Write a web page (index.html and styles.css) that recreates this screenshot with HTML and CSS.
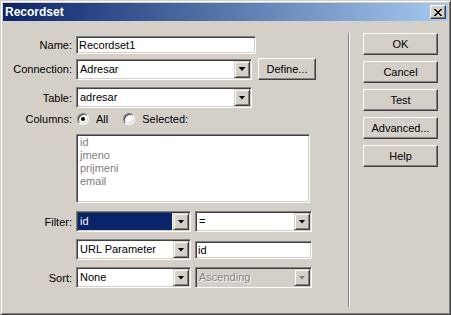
FILE: index.html
```html
<!DOCTYPE html>
<html lang="en">
<head>
  <meta charset="UTF-8" />
  <title>Recordset</title>
  <link rel="stylesheet" href="styles.css">
</head>
<body>
  <div class="dialog">
    <div class="titlebar">
      <span class="title">Recordset</span>
      <button class="close-btn" aria-label="Close">
        <svg width="8" height="7" viewBox="0 0 8 7" shape-rendering="crispEdges">
          <path d="M0 0h2v1h-2zM6 0h2v1h-2zM1 1h2v1h-2zM5 1h2v1h-2zM2 2h4v1h-4zM3 3h2v1h-2zM2 4h4v1h-4zM1 5h2v1h-2zM5 5h2v1h-2zM0 6h2v1h-2zM6 6h2v1h-2z" fill="#000"/>
        </svg>
      </button>
    </div>

    <div class="content">
      <div class="form">
        <div class="row row-name">
          <span class="label">Name:</span>
          <input class="field field-name" type="text" value="Recordset1" readonly />
        </div>

        <div class="row row-connection">
          <span class="label">Connection:</span>
          <div class="combo combo-wide">
            <span class="combo-text">Adresar</span>
            <span class="combo-btn"><i class="arrow"></i></span>
          </div>
          <button class="btn btn-define">Define...</button>
        </div>

        <div class="row row-table">
          <span class="label">Table:</span>
          <div class="combo combo-wide">
            <span class="combo-text">adresar</span>
            <span class="combo-btn"><i class="arrow"></i></span>
          </div>
        </div>

        <div class="row row-columns">
          <span class="label">Columns:</span>
          <span class="radio checked"></span>
          <span class="radio-label">All</span>
          <span class="radio radio-second"></span>
          <span class="radio-label">Selected:</span>
        </div>

        <div class="row row-list">
          <span class="label"></span>
          <div class="listbox">
            <div>id</div>
            <div>jmeno</div>
            <div>prijmeni</div>
            <div>email</div>
          </div>
        </div>

        <div class="row row-filter">
          <span class="label">Filter:</span>
          <div class="combo combo-small">
            <span class="combo-text selected">id</span>
            <span class="combo-btn"><i class="arrow"></i></span>
          </div>
          <div class="combo combo-right">
            <span class="combo-text">=</span>
            <span class="combo-btn"><i class="arrow"></i></span>
          </div>
        </div>

        <div class="row row-param">
          <span class="label"></span>
          <div class="combo combo-small">
            <span class="combo-text">URL Parameter</span>
            <span class="combo-btn"><i class="arrow"></i></span>
          </div>
          <input class="field field-param" type="text" value="id" readonly />
        </div>

        <div class="row row-sort">
          <span class="label">Sort:</span>
          <div class="combo combo-small">
            <span class="combo-text">None</span>
            <span class="combo-btn"><i class="arrow"></i></span>
          </div>
          <div class="combo combo-right disabled">
            <span class="combo-text">Ascending</span>
            <span class="combo-btn"><i class="arrow"></i></span>
          </div>
        </div>
      </div>

      <div class="divider"></div>

      <div class="actions">
        <button class="btn">OK</button>
        <button class="btn">Cancel</button>
        <button class="btn">Test</button>
        <button class="btn">Advanced...</button>
        <button class="btn">Help</button>
      </div>
    </div>
  </div>
</body>
</html>
```

FILE: styles.css
```css
body {
  margin: 0;
  padding: 0;
  font-family: "Liberation Sans", Arial, sans-serif;
  font-size: 11px;
  color: #000;
  background: #d4d0c8;
}

.dialog {
  width: 451px;
  height: 315px;
  box-sizing: border-box;
  border: 1px solid;
  border-color: #d4d0c8 #404040 #404040 #d4d0c8;
  box-shadow: inset 1px 1px #fff, inset -1px -1px #808080;
  padding: 2px;
  background: #d4d0c8;
  display: flex;
  flex-direction: column;
}

.titlebar {
  height: 18px;
  flex-shrink: 0;
  display: flex;
  align-items: center;
  justify-content: space-between;
  padding: 0 2px 0 2px;
  background: linear-gradient(to right, #0a246a, #a6caf0);
}

.title {
  color: #fff;
  font-weight: bold;
  font-size: 12px;
}

.close-btn {
  width: 16px;
  height: 14px;
  padding: 0;
  box-sizing: border-box;
  background: #d4d0c8;
  border: 1px solid;
  border-color: #fff #404040 #404040 #fff;
  box-shadow: inset -1px -1px #808080;
  display: flex;
  align-items: center;
  justify-content: center;
}

.content {
  flex: 1;
  display: flex;
}

.form {
  width: 345px;
  padding-top: 15px;
  display: flex;
  flex-direction: column;
}

.row {
  display: flex;
  align-items: center;
}

.row-name { height: 18px; }
.row-connection { height: 22px; margin-top: 4px; }
.row-table { height: 21px; margin-top: 7px; }
.row-columns { height: 14px; margin-top: 4px; }
.row-list { height: 69px; margin-top: 8px; }
.row-filter { height: 21px; margin-top: 8px; }
.row-param { height: 21px; margin-top: 7px; }
.row-sort { height: 21px; margin-top: 7px; }

.label {
  width: 69px;
  margin-right: 4px;
  flex-shrink: 0;
  text-align: right;
}

/* sunken 3d edge */
.field,
.combo,
.listbox,
.radio {
  box-sizing: border-box;
  border: 1px solid;
  border-color: #808080 #fff #fff #808080;
  box-shadow: inset 1px 1px #404040, inset -1px -1px #d4d0c8;
  background: #fff;
}

.field {
  height: 18px;
  padding: 0 2px;
  font: inherit;
  color: #000;
  outline: none;
}

.field-name { width: 180px; }
.field-param { width: 117px; margin-left: 4px; }

.combo {
  height: 21px;
  padding: 1px;
  display: flex;
}

.combo-wide { width: 176px; }
.combo-small { width: 115px; }
.combo-right { width: 117px; margin-left: 4px; }

.combo-text {
  flex: 1;
  padding-left: 2px;
  line-height: 17px;
  white-space: nowrap;
  overflow: hidden;
}

.combo-text.selected {
  background: #0a246a;
  color: #fff;
  margin-right: 1px;
}

.combo-btn {
  width: 16px;
  height: 17px;
  box-sizing: border-box;
  background: #d4d0c8;
  border: 1px solid;
  border-color: #d4d0c8 #404040 #404040 #d4d0c8;
  box-shadow: inset 1px 1px #fff, inset -1px -1px #808080;
  display: flex;
  align-items: center;
  justify-content: center;
}

.arrow {
  width: 7px;
  height: 4px;
  background: #000;
  clip-path: polygon(0 0, 100% 0, 50% 100%);
}

.combo.disabled {
  background: #d4d0c8;
}

.combo.disabled .combo-text {
  color: #808080;
  text-shadow: 1px 1px #fff;
}

.combo.disabled .arrow {
  background: #808080;
}

.radio {
  width: 12px;
  height: 12px;
  border-radius: 50%;
  margin-left: 1px;
  position: relative;
}

.radio.checked::after {
  content: "";
  position: absolute;
  left: 3px;
  top: 3px;
  width: 4px;
  height: 4px;
  border-radius: 50%;
  background: #000;
}

.radio-label {
  margin-left: 7px;
}

.radio-second {
  margin-left: 15px;
}

.listbox {
  width: 234px;
  height: 69px;
  padding: 1px 3px;
  line-height: 13px;
  color: #808080;
}

.divider {
  border-left: 1px solid #808080;
  border-right: 1px solid #fff;
  margin: 12px 0 5px;
}

.actions {
  margin-left: 13px;
  padding-top: 12px;
  display: flex;
  flex-direction: column;
  gap: 6px;
}

.btn {
  width: 75px;
  height: 22px;
  padding: 0;
  font: inherit;
  color: #000;
  background: #d4d0c8;
  border: 1px solid;
  border-color: #fff #404040 #404040 #fff;
  box-shadow: inset -1px -1px #808080;
}

.btn-define {
  width: 58px;
  margin-left: 6px;
}
```
